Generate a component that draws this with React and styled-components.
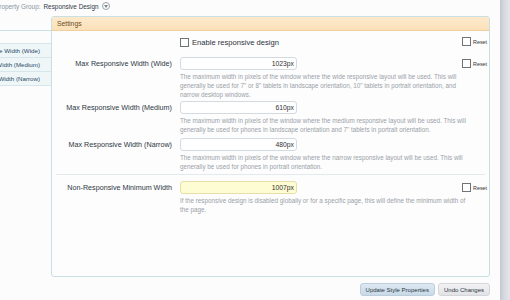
import React from "react";
import styled, { createGlobalStyle } from "styled-components";

const Global = createGlobalStyle`
  html, body { margin: 0; padding: 0; background: #fcfcfd; overflow: hidden; }
  body { font-family: "Liberation Sans", Arial, sans-serif; }
`;

const Page = styled.div`
  width: 510px;
  height: 300px;
  display: flex;
  overflow: hidden;
`;

const Main = styled.div`
  flex: 1;
  display: flex;
  flex-direction: column;
  min-width: 0;
`;

const Scrollbar = styled.div`
  width: 10px;
  flex-shrink: 0;
  background: linear-gradient(to right, #c4c8cf, #d6d9de 40%, #e4e6ea);
`;

const TopBar = styled.div`
  height: 16px;
  box-sizing: border-box;
  padding-bottom: 4px;
  display: flex;
  align-items: center;
  gap: 3px;
  margin-left: -5px;
  font-size: 6.4px;
  color: #8a949c;
`;

const GroupName = styled.span`
  color: #2f3b47;
`;

const DropCircle = styled.span`
  width: 6px;
  height: 6px;
  border: 1px solid #9aa3aa;
  border-radius: 50%;
  display: inline-flex;
  align-items: center;
  justify-content: center;
  svg { display: block; }
`;

const Body = styled.div`
  display: flex;
  flex: 1;
  min-width: 0;
`;

const Nav = styled.div`
  width: 51px;
  flex-shrink: 0;
  margin-top: 14px;
  border-top: 1px solid #cfe0e5;
  padding-top: 12px;
  align-self: flex-start;
`;

const NavItem = styled.div`
  height: 13px;
  display: flex;
  align-items: center;
  justify-content: flex-end;
  padding-right: 11px;
  background: #eef6f8;
  border-bottom: 1px solid #d6e6ea;
  border-top: ${p => (p.$first ? "1px solid #d6e6ea" : "none")};
  color: #2b4a66;
  font-size: 6.2px;
  white-space: nowrap;
  overflow: hidden;
  span { flex-shrink: 0; }
`;

const Right = styled.div`
  flex: 1;
  min-width: 0;
  display: flex;
  flex-direction: column;
  padding-right: 10px;
`;

const Panel = styled.div`
  height: 261px;
  box-sizing: border-box;
  border: 1px solid #cadfe2;
  border-radius: 3px;
  background: #fdfdfe;
  display: flex;
  flex-direction: column;
  overflow: hidden;
`;

const PanelHeader = styled.div`
  height: 13px;
  flex-shrink: 0;
  background: linear-gradient(#fde9cc, #fbe1b9);
  border-bottom: 1px solid #f0cf9f;
  display: flex;
  align-items: center;
  padding-left: 5px;
  font-size: 6.8px;
  color: #6b4c22;
`;

const Form = styled.div`
  padding: 4px 4px 0 4px;
  display: flex;
  flex-direction: column;
`;

const Row = styled.div`
  display: grid;
  grid-template-columns: 116px 280px 26px;
  margin-bottom: ${p => p.$mb || 0}px;
  & > :nth-child(2) { margin-left: 8px; }
  & > :nth-child(3) { margin-left: 10px; }
`;

const Label = styled.div`
  text-align: right;
  font-size: 7.2px;
  color: #2c3640;
  height: 13px;
  line-height: 13px;
  white-space: nowrap;
`;

const Field = styled.div`
  display: flex;
  flex-direction: column;
  width: 288px;
`;

const Input = styled.div`
  width: 113px;
  height: 11px;
  border: 1px solid ${p => (p.$hl ? "#e6e0a8" : "#d3dbe0")};
  background: ${p => (p.$hl ? "#fdfcd2" : "#ffffff")};
  border-radius: 3px;
  font-size: 6.8px;
  color: #333;
  display: flex;
  align-items: center;
  justify-content: flex-end;
  padding-right: 2px;
`;

const Desc = styled.div`
  margin-top: 2px;
  font-size: 6.3px;
  line-height: 9px;
  color: #9aa1a6;
`;

const Box = styled.span`
  width: 7px;
  height: 7px;
  border: 1px solid #6f7478;
  background: #fff;
  display: inline-block;
  flex-shrink: 0;
`;

const Check = styled.label`
  display: flex;
  align-items: center;
  gap: 3px;
  height: 14px;
  font-size: 7.6px;
  color: #2c3238;
  white-space: nowrap;
`;

const Reset = styled.label`
  display: flex;
  align-items: center;
  gap: 2px;
  height: 13px;
  font-size: 5.4px;
  color: #333;
  white-space: nowrap;
`;

const Sep = styled.div`
  height: 1px;
  background: #e2eaec;
  margin: 3px 0 6px 0;
`;

const Buttons = styled.div`
  display: flex;
  justify-content: flex-end;
  gap: 3px;
  margin-top: 6px;
`;

const Button = styled.div`
  height: 11px;
  padding: 0 5px;
  border-radius: 3px;
  border: 1px solid ${p => (p.$primary ? "#bccddc" : "#d4d6da")};
  background: ${p =>
    p.$primary
      ? "linear-gradient(#dde8f2, #c9d9e7)"
      : "linear-gradient(#f2f2f4, #e2e3e6)"};
  font-size: 6px;
  color: #2a3644;
  display: flex;
  align-items: center;
  white-space: nowrap;
`;

const Empty = styled.div``;

function ResetBox() {
  return (
    <Reset>
      <Box />
      Reset
    </Reset>
  );
}

const rows = [
  {
    label: "Max Responsive Width (Wide)",
    value: "1023px",
    reset: true,
    desc:
      "The maximum width in pixels of the window where the wide responsive layout will be used. This will generally be used for 7\" or 8\" tablets in landscape orientation, 10\" tablets in portrait orientation, and narrow desktop windows.",
    mb: 2,
  },
  {
    label: "Max Responsive Width (Medium)",
    value: "610px",
    desc:
      "The maximum width in pixels of the window where the medium responsive layout will be used. This will generally be used for phones in landscape orientation and 7\" tablets in portrait orientation.",
    mb: 4,
  },
  {
    label: "Max Responsive Width (Narrow)",
    value: "480px",
    desc:
      "The maximum width in pixels of the window where the narrow responsive layout will be used. This will generally be used for phones in portrait orientation.",
    mb: 0,
  },
];

export default function App() {
  return (
    <Page>
      <Global />
      <Main>
        <TopBar>
          <span>Property Group:</span>
          <GroupName>Responsive Design</GroupName>
          <DropCircle>
            <svg width="4" height="3" viewBox="0 0 4 3">
              <path d="M0 0 L4 0 L2 3 Z" fill="#7d868e" />
            </svg>
          </DropCircle>
        </TopBar>
        <Body>
          <Nav>
            <NavItem $first><span>Max Responsive Width (Wide)</span></NavItem>
            <NavItem><span>Max Responsive Width (Medium)</span></NavItem>
            <NavItem><span>Max Responsive Width (Narrow)</span></NavItem>
          </Nav>
          <Right>
            <Panel>
              <PanelHeader>Settings</PanelHeader>
              <Form>
                <Row $mb={8}>
                  <Empty />
                  <Check>
                    <Box />
                    Enable responsive design
                  </Check>
                  <ResetBox />
                </Row>
                {rows.map(r => (
                  <Row key={r.label} $mb={r.mb}>
                    <Label>{r.label}</Label>
                    <Field>
                      <Input>{r.value}</Input>
                      <Desc>{r.desc}</Desc>
                    </Field>
                    {r.reset ? <ResetBox /> : <Empty />}
                  </Row>
                ))}
                <Sep />
                <Row>
                  <Label>Non-Responsive Minimum Width</Label>
                  <Field>
                    <Input $hl>1007px</Input>
                    <Desc>
                      If the responsive design is disabled globally or for a specific page, this will define the minimum width of the page.
                    </Desc>
                  </Field>
                  <ResetBox />
                </Row>
              </Form>
            </Panel>
            <Buttons>
              <Button $primary>Update Style Properties</Button>
              <Button>Undo Changes</Button>
            </Buttons>
          </Right>
        </Body>
      </Main>
      <Scrollbar />
    </Page>
  );
}
